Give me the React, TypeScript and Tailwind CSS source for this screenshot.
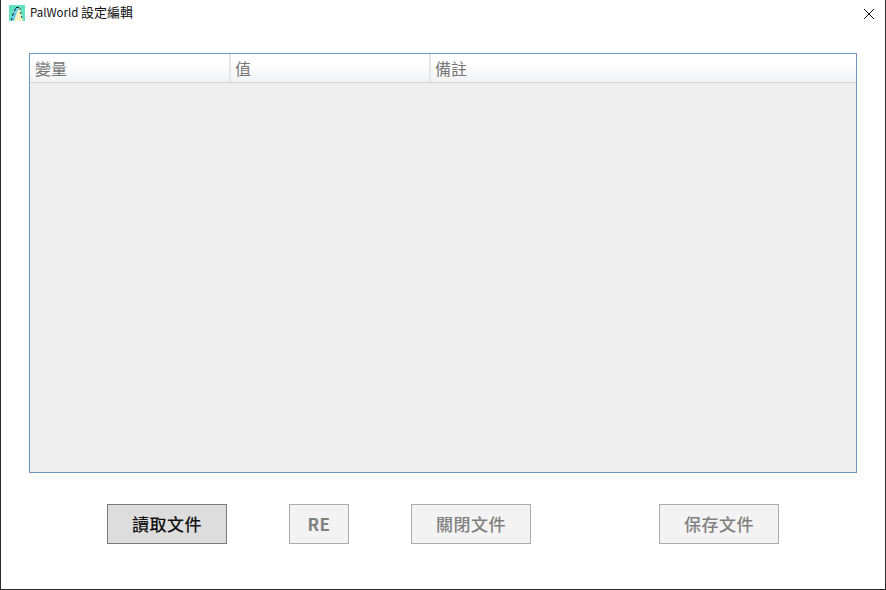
const font = "font-['Microsoft_JhengHei','Noto_Sans_CJK_TC','Noto_Sans',sans-serif]";

function AppIcon() {
  return (
    <svg width="16" height="16" viewBox="0 0 16 16" className="shrink-0">
      <rect width="16" height="16" fill="#62e3c0" />
      <path d="M1 16 L3 10 L6 3 L8 2 L11 2 L9 6 L7 16 Z" fill="#6ccbe6" />
      <path d="M5 16 L8 7 L10 3 L11 3 L14 16 Z" fill="#f6f2c4" />
      <path d="M2.5 15 L3 13 M3.5 11 L4.5 8 M5.5 6 L6.5 3.5 M7 2.5 L10 2.5" stroke="#10202a" strokeWidth="1" fill="none" />
      <path d="M11 3 L11 5 M11.5 7 L12 9 M12.5 11 L13 13" stroke="#1c3a3a" strokeWidth="1" fill="none" />
    </svg>
  );
}

function HeaderCell({ label, className }: { label: string; className: string }) {
  return <div className={`flex items-center text-[16px] text-[#777777] ${className}`}>{label}</div>;
}

function ActionButton({ label, primary, className }: { label: string; primary?: boolean; className: string }) {
  return (
    <button
      className={
        primary
          ? `${className} h-10 border border-[#7a7a7a] bg-[#dddddd] text-[17px] tracking-[0.5px] text-[#111111]`
          : `${className} h-10 border border-[#adadad] bg-[#f3f3f3] text-[17px] tracking-[0.5px] text-[#808080]`
      }
    >
      {label}
    </button>
  );
}

export default function App() {
  return (
    <div className={`${font} flex h-[590px] w-[886px] flex-col overflow-hidden border-x border-b border-[#2a2a2a] bg-white`}>
      <div className="flex h-[25px] items-center pl-2 pt-[1px]">
        <AppIcon />
        <span className="mb-[2px] ml-[5px] text-[11.5px] text-[#111111]">
          PalWorld <span className="text-[13px]">設定編輯</span>
        </span>
        <svg width="12" height="12" viewBox="0 0 12 12" className="ml-auto mr-[10px] mt-[2px]">
          <path d="M1 1 L11 11 M11 1 L1 11" stroke="#111111" strokeWidth="1" fill="none" />
        </svg>
      </div>

      <div className="mx-7 mt-7 flex h-[420px] flex-col border border-[#6f93bb] bg-[#efefef]">
        <div className="flex h-[29px] border-b border-[#d4d4d4] bg-gradient-to-b from-white from-30% to-[#f1f2f4]">
          <HeaderCell label="變量" className="w-[201px] border-r-2 border-[#e4e5e7] pl-[5px]" />
          <HeaderCell label="值" className="w-[200px] border-r-2 border-[#e4e5e7] pl-[4px]" />
          <HeaderCell label="備註" className="flex-1 pl-[4px]" />
        </div>
      </div>

      <div className="mt-[31px] flex pl-[106px]">
        <ActionButton label="讀取文件" primary className="w-[120px] font-medium" />
        <div className="ml-[62px]">
          <ActionButton label="RE" className="w-[60px] font-bold" />
        </div>
        <div className="ml-[62px]">
          <ActionButton label="關閉文件" className="w-[120px] font-medium" />
        </div>
        <div className="ml-[128px]">
          <ActionButton label="保存文件" className="w-[120px] font-medium" />
        </div>
      </div>
    </div>
  );
}
